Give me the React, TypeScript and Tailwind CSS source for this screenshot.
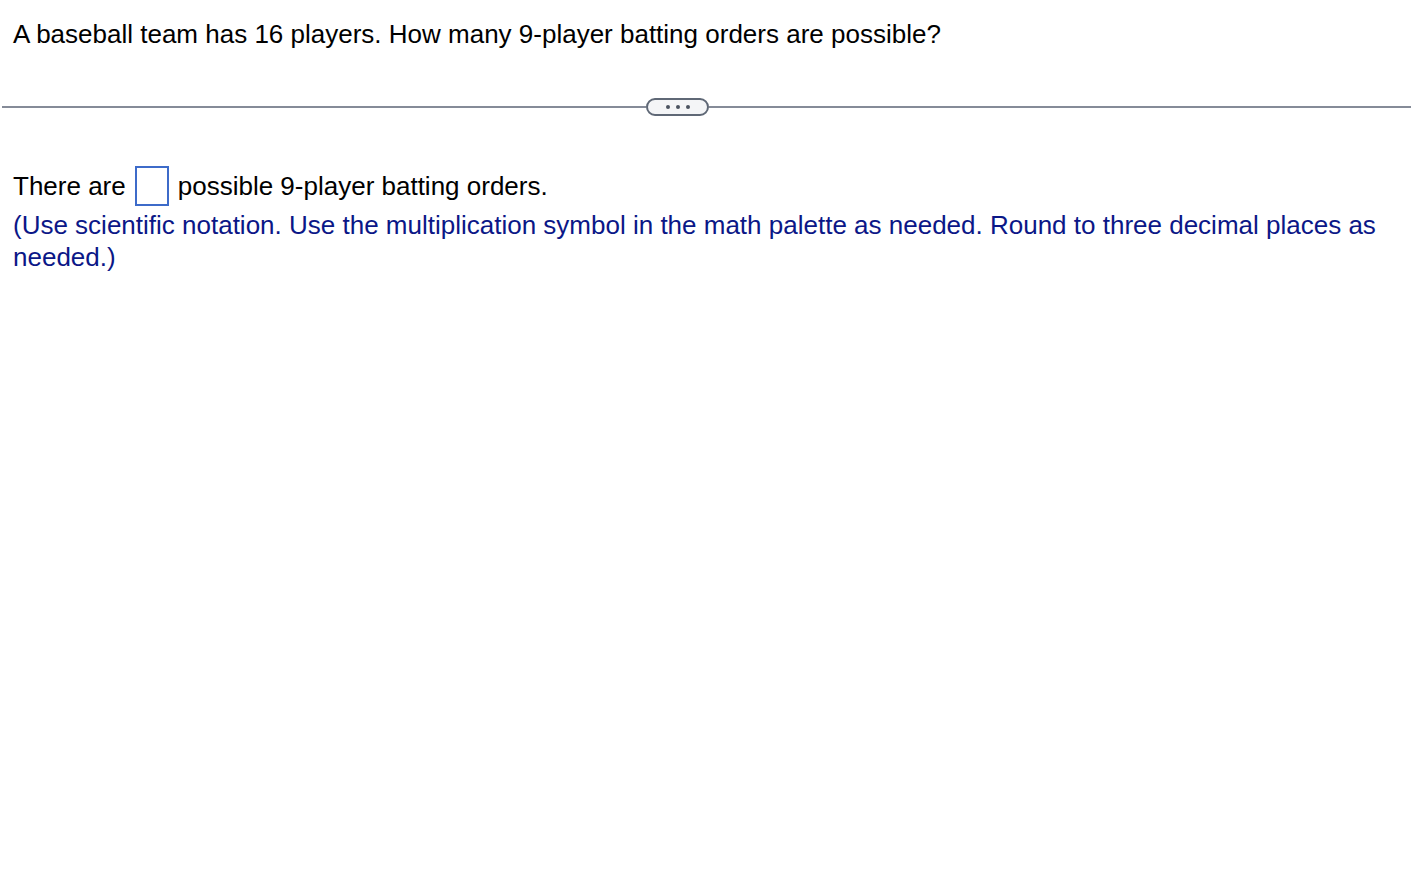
import React from 'react';

const App: React.FC = () => {
  return (
    <div className="min-h-[877px] bg-white font-['Liberation_Sans',Arial,sans-serif] text-[26px] text-black">
      <div className="px-[13px] pt-[16px] leading-[36px]">
        A baseball team has 16 players. How many 9-player batting orders are possible?
      </div>

      {/* divider with expand button */}
      <div className="flex items-center pl-[2px] w-[1411px] mt-[46px]">
        <div className="w-[644px] h-[2px] bg-[#858b98]" />
        <button className="flex items-center justify-center gap-[6px] w-[63px] h-[18px] rounded-full border-2 border-[#5f6876] bg-[#f4f5f7]">
          <span className="w-[4px] h-[4px] rounded-full bg-[#4b5360]" />
          <span className="w-[4px] h-[4px] rounded-full bg-[#4b5360]" />
          <span className="w-[4px] h-[4px] rounded-full bg-[#4b5360]" />
        </button>
        <div className="flex-1 h-[2px] bg-[#858b98]" />
      </div>

      <div className="px-[13px] mt-[50px]">
        <div className="flex items-center h-[40px]">
          <span>There are</span>
          <span className="inline-block w-[34px] h-[40px] border-2 border-[#3d6bc9] ml-[9px] mr-[9px]" />
          <span>possible 9-player batting orders.</span>
        </div>
        <p className="text-[#0b1787] leading-[32px] mt-[3px]">
          (Use scientific notation. Use the multiplication symbol in the math palette as needed. Round to three decimal places as needed.)
        </p>
      </div>
    </div>
  );
};

export default App;
